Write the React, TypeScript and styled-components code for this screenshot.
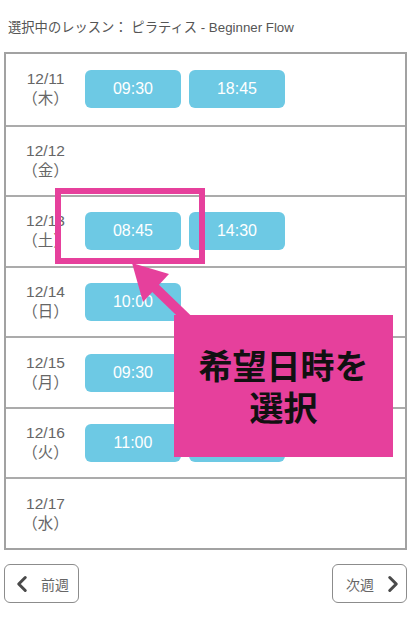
import React from "react";
import styled, { createGlobalStyle } from "styled-components";
import { ChevronLeft, ChevronRight } from "lucide-react";

const PINK = "#e6409c";

const GlobalStyle = createGlobalStyle`
  html, body { margin: 0; padding: 0; background: #fff; }
  body { font-family: "Liberation Sans", "Noto Sans CJK JP", sans-serif; }
  * { box-sizing: border-box; }
`;

const Page = styled.div`
  position: relative;
  width: 411px;
  height: 630px;
  overflow: hidden;
  background: #fff;
`;

const Header = styled.div`
  padding: 18px 8px 0;
  height: 52px;
  font-size: 13.3px;
  line-height: 20px;
  color: #555;
`;

const Schedule = styled.div`
  margin: 0 4px;
  height: 498px;
  border: 2px solid #a2a2a2;
  display: grid;
  grid-template-rows: repeat(7, 1fr);
`;

const Row = styled.div<{ $first?: boolean }>`
  display: flex;
  align-items: center;
  border-top: ${(p) => (p.$first ? "none" : "2px solid #ababab")};
`;

const DateCell = styled.div`
  width: 79px;
  text-align: center;
  color: #666;
  font-size: 15.5px;
  line-height: 20px;
`;

const Slots = styled.div`
  display: flex;
  gap: 8px;
`;

const SlotButton = styled.div`
  width: 96px;
  height: 38px;
  border-radius: 6px;
  background: #6dc9e4;
  color: #fff;
  font-size: 16px;
  display: flex;
  align-items: center;
  justify-content: center;
`;

const Nav = styled.div`
  display: flex;
  justify-content: space-between;
  padding: 0 4px;
  margin-top: 14px;
`;

const NavButton = styled.div<{ $next?: boolean }>`
  width: 75px;
  height: 39px;
  border: 1.5px solid #8c8c8c;
  border-radius: 6px;
  background: #fff;
  color: #666;
  font-size: 14px;
  white-space: nowrap;
  display: flex;
  align-items: center;
  gap: 6px;
  padding: ${(p) => (p.$next ? "0 0 0 13px" : "0 0 0 4px")};
  svg { color: #4a4a4a; flex-shrink: 0; }
`;

const Highlight = styled.div`
  position: absolute;
  left: 55px;
  top: 188px;
  width: 150px;
  height: 76px;
  border: 6px solid ${PINK};
`;

const ArrowSvg = styled.svg`
  position: absolute;
  left: 0;
  top: 0;
  pointer-events: none;
`;

const Callout = styled.div`
  position: absolute;
  left: 174px;
  top: 315px;
  width: 219px;
  height: 142px;
  background: ${PINK};
  display: flex;
  flex-direction: column;
  align-items: center;
  justify-content: center;
  font-family: "Noto Sans CJK JP", sans-serif;
  font-weight: 700;
  font-size: 34px;
  color: #111;
`;

const CalloutLine = styled.div`
  height: 42px;
  line-height: 42px;
`;

type Day = { date: string; wd: string; slots: string[] };

const days: Day[] = [
  { date: "12/11", wd: "（木）", slots: ["09:30", "18:45"] },
  { date: "12/12", wd: "（金）", slots: [] },
  { date: "12/13", wd: "（土）", slots: ["08:45", "14:30"] },
  { date: "12/14", wd: "（日）", slots: ["10:00"] },
  { date: "12/15", wd: "（月）", slots: ["09:30", ""] },
  { date: "12/16", wd: "（火）", slots: ["11:00", ""] },
  { date: "12/17", wd: "（水）", slots: [] },
];

export default function App() {
  return (
    <Page>
      <GlobalStyle />
      <Header>選択中のレッスン： ピラティス - Beginner Flow</Header>
      <Schedule>
        {days.map((d, i) => (
          <Row key={d.date} $first={i === 0}>
            <DateCell>
              {d.date}
              <br />
              {d.wd}
            </DateCell>
            <Slots>
              {d.slots.map((s, j) => (
                <SlotButton key={j}>{s}</SlotButton>
              ))}
            </Slots>
          </Row>
        ))}
      </Schedule>
      <Nav>
        <NavButton>
          <ChevronLeft size={26} strokeWidth={2.8} />
          前週
        </NavButton>
        <NavButton $next>
          次週
          <ChevronRight size={26} strokeWidth={2.8} />
        </NavButton>
      </Nav>
      <Highlight />
      <ArrowSvg width={411} height={630} viewBox="0 0 411 630">
        <line x1={150} y1={283} x2={205} y2={336} stroke={PINK} strokeWidth={10} />
        <polygon points="132,263 169,274 143,302" fill={PINK} />
      </ArrowSvg>
      <Callout>
        <CalloutLine>希望日時を</CalloutLine>
        <CalloutLine>選択</CalloutLine>
      </Callout>
    </Page>
  );
}
